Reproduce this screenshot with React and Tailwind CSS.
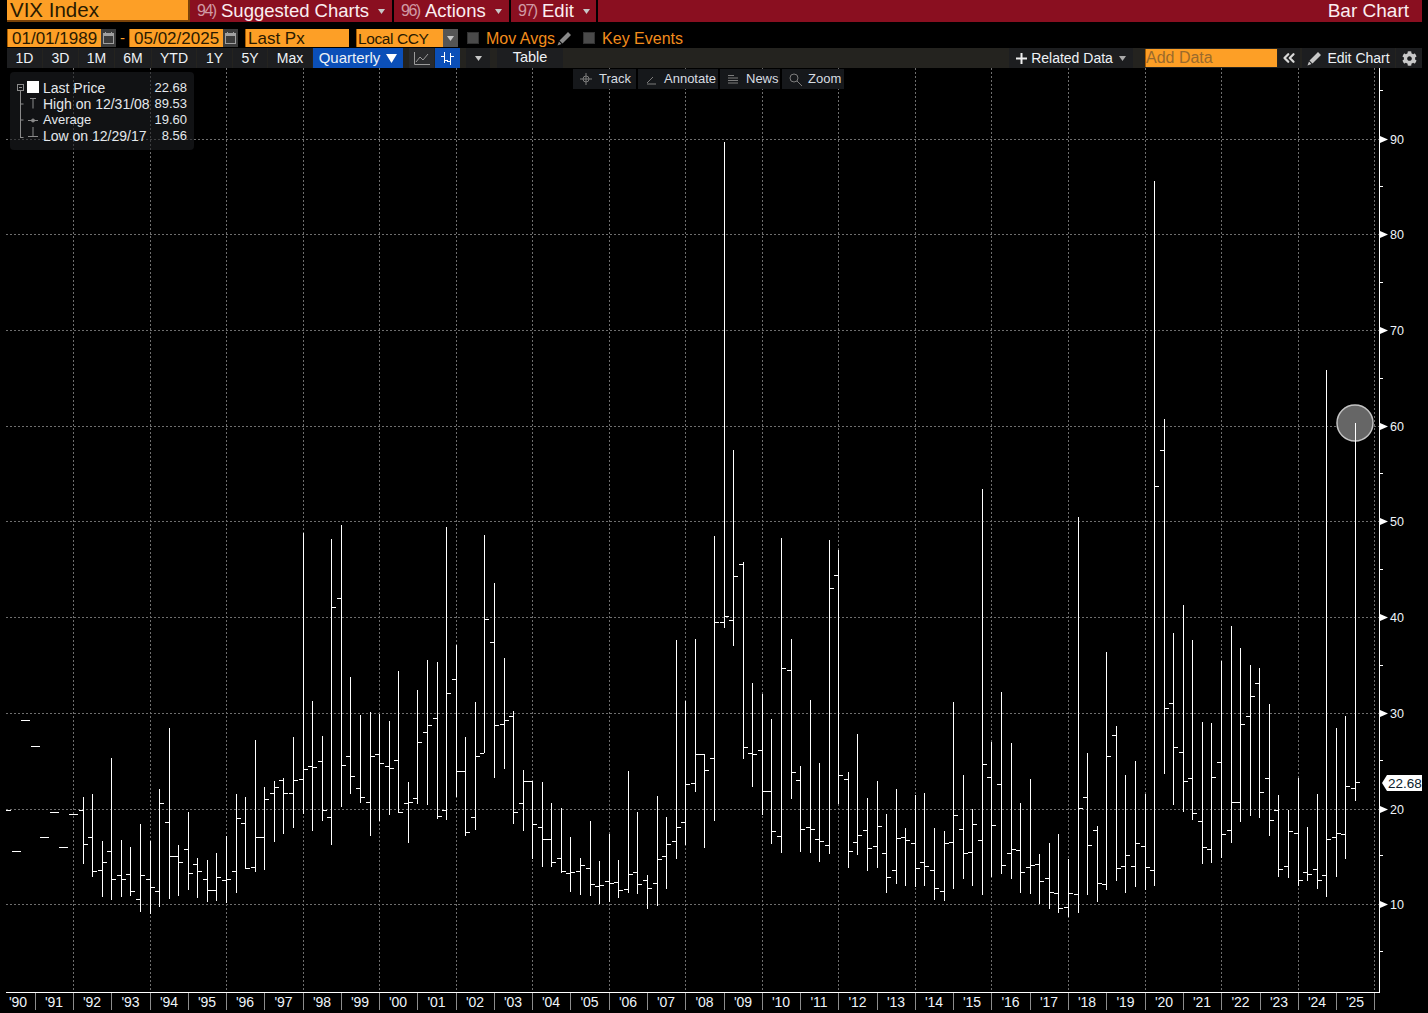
import React from 'react'
import {ChevronsLeft} from 'lucide-react'
import {FaCog} from 'react-icons/fa'

// [x, high, low, open, close], all in page pixels
const bars = [
	[83, 797, 864, 810, 844], [92, 794, 877, 837, 871], [102, 841, 897, 870, 862], [111, 758, 900, 851, 879],
	[121, 840, 897, 875, 879], [130, 847, 896, 874, 891], [140, 824, 912, 899, 875], [150, 841, 914, 879, 887],
	[159, 789, 907, 891, 803], [169, 728, 899, 822, 856], [178, 845, 896, 856, 862], [188, 812, 890, 849, 873],
	[197, 858, 898, 864, 871], [207, 860, 902, 879, 890], [216, 853, 901, 890, 877], [226, 836, 903, 880, 879],
	[236, 794, 893, 871, 818], [245, 797, 869, 823, 868], [255, 740, 872, 867, 837], [264, 787, 870, 837, 799],
	[274, 781, 842, 793, 787], [283, 778, 834, 780, 793], [293, 737, 828, 793, 780], [303, 533, 814, 779, 769],
	[312, 701, 831, 766, 767], [322, 736, 821, 761, 810], [331, 539, 845, 817, 607], [341, 525, 807, 598, 765],
	[350, 677, 794, 756, 776], [360, 715, 803, 788, 797], [370, 712, 836, 802, 756], [379, 714, 821, 754, 763],
	[389, 721, 815, 766, 768], [398, 671, 813, 760, 812], [408, 782, 843, 803, 802], [417, 690, 804, 798, 742],
	[427, 660, 805, 732, 725], [437, 662, 819, 718, 816], [446, 527, 820, 810, 693], [456, 645, 797, 679, 771],
	[465, 737, 836, 771, 832], [475, 702, 830, 817, 756], [484, 535, 753, 753, 619], [494, 583, 778, 642, 725],
	[504, 658, 769, 724, 720], [513, 711, 824, 716, 812], [523, 770, 831, 803, 781], [532, 781, 859, 781, 824],
	[542, 782, 867, 827, 839], [551, 803, 867, 839, 862], [561, 808, 873, 858, 871], [570, 837, 892, 873, 872],
	[580, 858, 895, 871, 865], [590, 821, 896, 868, 884], [599, 861, 904, 886, 885], [609, 834, 902, 881, 883],
	[618, 860, 898, 882, 890], [628, 771, 893, 889, 874], [637, 812, 894, 872, 884], [647, 875, 909, 880, 888],
	[657, 796, 906, 883, 859], [666, 817, 889, 856, 844], [676, 640, 859, 841, 827], [685, 701, 845, 822, 784],
	[695, 639, 792, 783, 754], [704, 754, 848, 754, 770], [714, 536, 821, 758, 622], [724, 142, 628, 622, 616],
	[733, 450, 646, 620, 576], [743, 562, 759, 564, 747], [752, 683, 787, 753, 754], [762, 694, 815, 750, 791],
	[771, 719, 844, 791, 831], [781, 538, 853, 836, 668], [791, 639, 799, 670, 772], [800, 766, 852, 780, 829],
	[810, 700, 853, 827, 829], [819, 763, 862, 839, 841], [829, 540, 854, 845, 588], [838, 550, 804, 575, 775],
	[848, 772, 868, 779, 851], [857, 734, 855, 842, 835], [867, 798, 871, 830, 848], [877, 781, 868, 846, 826],
	[886, 814, 893, 853, 877], [896, 789, 884, 870, 838], [905, 828, 886, 837, 840], [915, 795, 887, 843, 868],
	[924, 793, 886, 862, 866], [934, 828, 900, 870, 888], [944, 831, 901, 891, 843], [953, 702, 889, 842, 815],
	[963, 775, 879, 829, 853], [972, 809, 886, 852, 824], [982, 489, 895, 840, 764], [991, 742, 877, 777, 825],
	[1001, 692, 874, 784, 865], [1011, 743, 879, 853, 849], [1020, 803, 893, 850, 872], [1030, 779, 894, 867, 865],
	[1039, 854, 904, 864, 881], [1049, 843, 909, 878, 892], [1058, 834, 913, 893, 908], [1068, 859, 917, 907, 893],
	[1078, 517, 913, 894, 808], [1087, 753, 895, 797, 845], [1097, 826, 902, 830, 883], [1106, 652, 890, 884, 756],
	[1116, 726, 881, 735, 868], [1125, 775, 893, 866, 855], [1135, 761, 887, 866, 843], [1145, 794, 890, 846, 867],
	[1154, 181, 886, 870, 486], [1164, 419, 774, 450, 708], [1173, 633, 805, 703, 747], [1183, 605, 812, 752, 781],
	[1192, 640, 820, 778, 813], [1202, 722, 864, 821, 847], [1211, 723, 863, 849, 777], [1221, 661, 858, 762, 834],
	[1231, 626, 843, 830, 802], [1240, 648, 822, 802, 724], [1250, 665, 816, 716, 696], [1259, 668, 818, 683, 792],
	[1269, 704, 836, 778, 820], [1278, 795, 877, 810, 869], [1288, 810, 878, 866, 831], [1298, 778, 886, 833, 880],
	[1307, 827, 881, 872, 874], [1317, 794, 889, 869, 880], [1326, 370, 897, 875, 839], [1336, 728, 877, 837, 833],
	[1345, 716, 859, 834, 786], [1355, 423, 801, 788, 782],
]

// the first quarters have no range, only a flat dash: [x, width, y]
const dashes = [[6, 5, 810], [12, 9, 851], [21, 9, 720], [31, 9, 746], [40, 9, 837], [50, 9, 812], [59, 9, 847], [69, 9, 814]]

const gridX = [73, 150, 226, 303, 379, 456, 532, 609, 685, 762, 838, 915, 991, 1068, 1145, 1221, 1298, 1374]
const gridY = [139, 234, 330, 426, 521, 617, 713, 809, 904]
const minorY = [90, 186, 282, 378, 473, 569, 665, 760, 855, 951]
const yearTicks = [35, 73, 111, 150, 188, 226, 264, 303, 341, 379, 417, 456, 494, 532, 570, 609, 647, 685, 724, 762, 800, 838, 877, 915, 953, 991, 1030, 1068, 1106, 1145, 1183, 1221, 1260, 1298, 1336, 1374]
const years = ['90', '91', '92', '93', '94', '95', '96', '97', '98', '99', '00', '01', '02', '03', '04', '05', '06', '07', '08', '09', '10', '11', '12', '13', '14', '15', '16', '17', '18', '19', '20', '21', '22', '23', '24', '25']

const Caret = ({className = 'fill-[#c8c8c8]'}) => (
	<svg width="7" height="5" viewBox="0 0 7 5" className={className}>
		<path d="M0 0h7L3.5 5z" />
	</svg>
)

const Calendar = () => (
	<svg width="11" height="12" viewBox="0 0 11 12" fill="none" stroke="#a0a0a0">
		<rect x="0.5" y="1.5" width="10" height="10" />
		<rect x="1" y="1" width="9" height="3" fill="#a0a0a0" stroke="none" />
		<path d="M2.5 0v2M8.5 0v2" />
	</svg>
)

const Pencil = ({color = '#8a8a8a'}) => (
	<svg width="15" height="15" viewBox="0 0 15 15" fill={color}>
		<path d="M11 1l3 3-8.500 8.500-3-3zM2 10.500l2.500 2.500L0.500 14.500z" />
	</svg>
)

const MenuButton = ({num, label, className}) => (
	<div className={`flex items-center border-r-2 border-black pl-[7px] whitespace-nowrap ${className}`}>
		<span className="w-[18px] mr-[6px] shrink-0 text-[16px] tracking-[-1.5px] text-[#d09aa4]">{num}</span>
		<span className="text-[18.500px] text-[#fbeef0]">{label}</span>
		<span className="ml-[9px]">
			<Caret />
		</span>
	</div>
)

const Field = ({children, className}) => (
	<div className={`flex items-center h-full bg-[#fd9f26] border-l border-[#a85c00] pt-px pl-[4px] text-[#2a1a00] whitespace-nowrap ${className}`}>
		{children}
	</div>
)

const Check = () => <div className="w-[12px] h-[12px] bg-[#4a4a4a] border border-[#333]" />

const RangeButton = ({children, className}) => (
	<div className={`flex items-center justify-center h-full bg-[#1d1e20] text-[#eef2f6] whitespace-nowrap ${className}`}>
		{children}
	</div>
)

const ToolButton = ({icon, label, className}) => (
	<div className={`flex items-center h-full bg-[#16181b] text-[13px] text-[#d8dde2] ${className}`}>
		<span className="flex justify-center w-[26px]">{icon}</span>
		<span>{label}</span>
	</div>
)

const LegendRow = ({label, value, labelClass = ''}) => (
	<div className="flex justify-between h-[16px] leading-[16px]">
		<span className={labelClass}>{label}</span>
		<span className="text-[13px]">{value}</span>
	</div>
)

const Chart = () => (
	<svg width="1428" height="945" viewBox="0 68 1428 945" className="block" shapeRendering="crispEdges">
		{gridY.map((y) => (
			<line key={y} x1="6" x2="1379" y1={y + 0.5} y2={y + 0.5} stroke="#6e6e6e" strokeDasharray="2 2" />
		))}
		{gridX.map((x) => (
			<line key={x} x1={x + 0.5} x2={x + 0.5} y1="68" y2="992" stroke="#6e6e6e" strokeDasharray="2 2" />
		))}

		<circle cx="1355" cy="423" r="18" fill="#666" stroke="#c4c4c4" strokeWidth="1.500" shapeRendering="auto" />

		{dashes.map(([x, w, y]) => (
			<rect key={x} x={x} y={y} width={w} height="1" fill="#fff" />
		))}
		{bars.map(([x, high, low, open, close]) => (
			<g key={x} fill="#fff">
				<rect x={x} y={high} width="1" height={low - high} />
				<rect x={x - 4} y={open} width="4" height="1" />
				<rect x={x + 1} y={close} width="4" height="1" />
			</g>
		))}

		<rect x="1379" y="68" width="1" height="925" fill="#fff" />
		<rect x="6" y="992" width="1374" height="1" fill="#fff" />
		{minorY.map((y) => (
			<rect key={y} x="1380" y={y} width="3" height="1" fill="#fff" />
		))}
		{gridY.map((y, i) => (
			<g key={y}>
				<path d={`M1380 ${y - 3}L1388 ${y + 0.5}L1380 ${y + 4}z`} fill="#fff" shapeRendering="auto" />
				<text x="1390" y={y + 5} fontSize="12.500" fill="#eef4fa" shapeRendering="auto">
					{90 - i * 10}
				</text>
			</g>
		))}

		<path d="M1382 783l5-8h35v16h-35z" fill="#fff" shapeRendering="auto" />
		<text x="1388" y="788" fontSize="13.500" fill="#0b1c2c" shapeRendering="auto">
			22.68
		</text>

		{yearTicks.map((x) => (
			<rect key={x} x={x} y="993" width="1" height="17" fill="#8c8c8c" />
		))}
		{years.map((year, i) => (
			<text
				key={year}
				x={i === 0 ? 18 : (yearTicks[i - 1] + yearTicks[i]) / 2}
				y="1007"
				fontSize="14"
				textAnchor="middle"
				fill="#eef4fa"
				shapeRendering="auto"
			>
				{`'${year}`}
			</text>
		))}
	</svg>
)

const LegendTree = () => (
	<svg width="26" height="64" viewBox="0 0 26 64" className="shrink-0" fill="none" stroke="#8a8a8a">
		<rect x="0.500" y="4.500" width="6" height="6" />
		<path d="M2 7.500h3M3.500 11v47M3.500 24h3M3.500 40h3M3.500 57.500h3" />
		<rect x="10" y="1" width="12" height="12" fill="#fff" stroke="none" />
		<path d="M13 18.500h6M16 18.500v10M11 40.500h10M11 56.500h10M16 47v9" />
		<circle cx="16" cy="40.500" r="1.500" fill="#8a8a8a" />
	</svg>
)

const App = () => {
	return (
		<div className="flex flex-col w-[1428px] h-[1013px] overflow-hidden bg-black font-['Liberation_Sans',sans-serif]">
			<header className="flex shrink-0 h-[22px] ml-[7px] mr-[6px] bg-[#8a0f20]">
				<div className="flex items-center w-[183px] bg-[#fd9f26] border-b-2 border-r-2 border-[#7a4208] pl-[3px] text-[20.500px] leading-none text-[#2a1a00]">
					VIX Index
				</div>
				<MenuButton num="94)" label="Suggested Charts" className="w-[204px]" />
				<MenuButton num="96)" label="Actions" className="w-[117px]" />
				<MenuButton num="97)" label="Edit" className="w-[87px]" />
				<div className="flex-1 text-right pr-[13px] text-[19px] leading-[21px] text-[#fbeef0]">Bar Chart</div>
			</header>

			<div className="flex items-center shrink-0 h-[18px] mt-[7px] ml-[7px]">
				<Field className="w-[94px] text-[17px]">01/01/1989</Field>
				<div className="flex items-center justify-center w-[15px] h-full bg-[#3c3c3c]">
					<Calendar />
				</div>
				<span className="w-[13px] text-center text-[15px] text-[#fd9f26]">-</span>
				<Field className="w-[94px] text-[17px]">05/02/2025</Field>
				<div className="flex items-center justify-center w-[15px] h-full bg-[#3c3c3c]">
					<Calendar />
				</div>
				<Field className="w-[104px] ml-[7px] !pl-[2px] text-[17px]">Last Px</Field>
				<Field className="w-[87px] ml-[7px] !pl-px text-[15.500px] tracking-[-0.4px]">Local CCY</Field>
				<div className="flex items-center justify-center w-[15px] h-full bg-[#555]">
					<Caret />
				</div>
				<div className="ml-[9px]">
					<Check />
				</div>
				<span className="ml-[7px] pt-px text-[16px] text-[#f28c1c]">Mov Avgs</span>
				<span className="ml-[2px]">
					<Pencil />
				</span>
				<div className="ml-[11px]">
					<Check />
				</div>
				<span className="ml-[7px] pt-px text-[16px] text-[#f28c1c]">Key Events</span>
			</div>

			<div className="flex items-center gap-px shrink-0 h-[20px] mt-px ml-[7px] mr-[6px] bg-[#24231f] text-[14px]">
				<RangeButton className="w-[35px]">1D</RangeButton>
				<RangeButton className="w-[35px]">3D</RangeButton>
				<RangeButton className="w-[35px]">1M</RangeButton>
				<RangeButton className="w-[36px]">6M</RangeButton>
				<RangeButton className="w-[44px]">YTD</RangeButton>
				<RangeButton className="w-[35px]">1Y</RangeButton>
				<RangeButton className="w-[34px]">5Y</RangeButton>
				<RangeButton className="w-[44px]">Max</RangeButton>
				<RangeButton className="w-[90px] !bg-[#0b4fb8] gap-[6px] text-[15px]">
					Quarterly
					<svg width="11" height="9" viewBox="0 0 11 9" fill="#fff">
						<path d="M0 0h11L5.500 9z" />
					</svg>
				</RangeButton>
				<RangeButton className="w-[25px] ml-[5px] !bg-[#2a2b2d]">
					<svg width="16" height="13" viewBox="0 0 16 13" fill="none" stroke="#9a9a9a">
						<path d="M0.500 0v12.500H16M2 10l4-5 3 3 5-6" />
					</svg>
				</RangeButton>
				<RangeButton className="w-[25px] !bg-[#0b4fb8]">
					<svg width="14" height="14" viewBox="0 0 14 14" fill="none" stroke="#fff" shapeRendering="crispEdges">
						<path d="M3.500 1v11M9.500 2v12M0 5h3.500M4 9h3M6 10h3.500M10 5h3" />
					</svg>
				</RangeButton>
				<RangeButton className="w-[24px] ml-[5px]">
					<Caret />
				</RangeButton>
				<RangeButton className="w-[66px] ml-[6px] text-[14.500px]">Table</RangeButton>
				<div className="flex-1" />
				<RangeButton className="w-[124px] gap-[4px]">
					<svg width="11" height="11" viewBox="0 0 11 11" fill="#eee">
						<path d="M4.500 0h2v4.500H11v2H6.500V11h-2V6.500H0v-2h4.500z" />
					</svg>
					Related Data
					<span className="ml-[2px]">
						<Caret className="fill-[#aaa]" />
					</span>
				</RangeButton>
				<div className="flex items-center h-[18px] w-[132px] ml-[11px] bg-[#fd9f26] border-l border-[#a85c00] text-[16px] text-[#9a6a2c]">
					Add Data
				</div>
				<RangeButton className="w-[22px]">
					<ChevronsLeft size={18} strokeWidth={3} color="#d8d8d8" />
				</RangeButton>
				<RangeButton className="w-[93px] ml-px gap-[5px]">
					<Pencil color="#c8c8c8" />
					Edit Chart
				</RangeButton>
				<RangeButton className="w-[26px]">
					<FaCog size={15} color="#c8c8c8" />
				</RangeButton>
			</div>

			<main className="relative flex-1">
				<Chart />

				<div className="absolute left-[10px] top-[4px] flex w-[184px] h-[78px] pt-[8px] pl-[7px] pr-[7px] rounded bg-[#1c1e21]/60 text-[14px] text-[#e4e8ec]">
					<LegendTree />
					<div className="flex-1">
						<LegendRow label="Last Price" value="22.68" />
						<LegendRow label="High on 12/31/08" value="89.53" />
						<LegendRow label="Average" value="19.60" labelClass="text-[13px]" />
						<LegendRow label="Low on 12/29/17" value="8.56" />
					</div>
				</div>

				<div className="absolute left-[573px] top-px flex gap-[2px] h-[20px]">
					<ToolButton
						className="w-[63px]"
						label="Track"
						icon={
							<svg width="12" height="12" viewBox="0 0 12 12" fill="none" stroke="#7c7c7c">
								<circle cx="6" cy="6" r="3" />
								<path d="M6 0v12M0 6h12" />
							</svg>
						}
					/>
					<ToolButton
						className="w-[80px]"
						label="Annotate"
						icon={
							<svg width="11" height="11" viewBox="0 0 11 11" fill="none" stroke="#7c7c7c">
								<path d="M1 10h9M1 9l6-6" />
							</svg>
						}
					/>
					<ToolButton
						className="w-[60px]"
						label="News"
						icon={
							<svg width="10" height="10" viewBox="0 0 10 10" stroke="#7c7c7c">
								<path d="M0 1.500h6M0 4h10M0 6.500h10M0 9h10" />
							</svg>
						}
					/>
					<ToolButton
						className="w-[62px]"
						label="Zoom"
						icon={
							<svg width="13" height="13" viewBox="0 0 13 13" fill="none" stroke="#7c7c7c">
								<circle cx="5" cy="5" r="4" />
								<path d="M8 8l5 5" />
							</svg>
						}
					/>
				</div>
			</main>
		</div>
	)
}

export default App
